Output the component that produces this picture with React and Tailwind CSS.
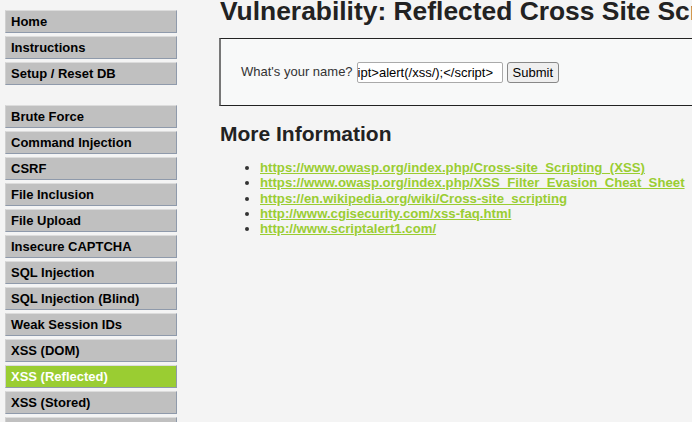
const menuTop = ["Home", "Instructions", "Setup / Reset DB"];

const menuVulns = [
  "Brute Force",
  "Command Injection",
  "CSRF",
  "File Inclusion",
  "File Upload",
  "Insecure CAPTCHA",
  "SQL Injection",
  "SQL Injection (Blind)",
  "Weak Session IDs",
  "XSS (DOM)",
  "XSS (Reflected)",
  "XSS (Stored)",
  "CSP Bypass",
];

const links = [
  "https://www.owasp.org/index.php/Cross-site_Scripting_(XSS)",
  "https://www.owasp.org/index.php/XSS_Filter_Evasion_Cheat_Sheet",
  "https://en.wikipedia.org/wiki/Cross-site_scripting",
  "http://www.cgisecurity.com/xss-faq.html",
  "http://www.scriptalert1.com/",
];

function MenuItem({ label, active }) {
  return (
    <li
      className={
        "h-[23px] leading-[21px] pl-[5px] text-[13px] font-bold border border-t-[#dcdcdc] border-l-[#d0d0d0] border-r-[#8f9aab] border-b-[#8f9aab] " +
        (active ? "bg-[#9acd32] text-white" : "bg-[#c0c0c0] text-black")
      }
    >
      {label}
    </li>
  );
}

export default function App() {
  return (
    <div
      className="w-[692px] h-[422px] overflow-hidden bg-[#f4f4f4] flex"
      style={{ fontFamily: '"Liberation Sans", Arial, sans-serif' }}
    >
      {/* Sidebar */}
      <div className="w-[219px] shrink-0 pl-[5px] pt-[10px]">
        <ul className="w-[172px] flex flex-col gap-[3px]">
          {menuTop.map((m) => (
            <MenuItem key={m} label={m} />
          ))}
        </ul>
        <ul className="w-[172px] flex flex-col gap-[3px] mt-[20px]">
          {menuVulns.map((m) => (
            <MenuItem key={m} label={m} active={m === "XSS (Reflected)"} />
          ))}
        </ul>
      </div>

      {/* Main */}
      <div className="flex-1 min-w-0">
        <h1 className="pl-[1px] text-[26.4px] leading-[30px] font-bold text-[#222] whitespace-nowrap -mt-[4px]">
          Vulnerability: Reflected Cross Site Scripting (XSS)
        </h1>

        <div className="mt-[12px] w-[520px] h-[68px] bg-[#f8f9f9] border border-[#222] border-l-2 border-l-[#777] flex items-center pl-[20px]">
          <span className="text-[13px] text-[#333]">What's your name?</span>
          <div className="ml-[4px] w-[146px] h-[21px] bg-white border border-[#aaa] rounded-[2px] text-[13px] leading-[19px] text-black overflow-hidden whitespace-nowrap pl-[2px]">
            <span className="-ml-[2px]">ipt&gt;alert(/xss/);&lt;/script&gt;</span>
          </div>
          <button className="ml-[4px] h-[21px] px-[5px] bg-[#efefef] border border-[#888] rounded-[3px] text-[13px] leading-[19px] text-black">
            Submit
          </button>
        </div>

        <h2 className="mt-[16px] pl-[1px] text-[21px] leading-[24px] font-bold text-[#222]">
          More Information
        </h2>

        <ul className="mt-[14px] pl-[41px] list-disc text-[13.2px] leading-[15.3px] text-[#333] marker:text-[#333]">
          {links.map((l) => (
            <li key={l}>
              <a className="font-bold text-[#9acd32] underline">{l}</a>
            </li>
          ))}
        </ul>
      </div>
    </div>
  );
}
